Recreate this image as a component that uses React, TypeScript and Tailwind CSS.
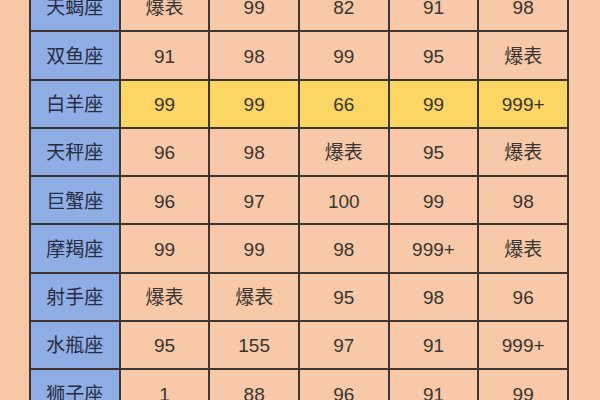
import React from "react";

const rows: { name: string; vals: string[]; hl?: boolean }[] = [
  { name: "天蝎座", vals: ["爆表", "99", "82", "91", "98"] },
  { name: "双鱼座", vals: ["91", "98", "99", "95", "爆表"] },
  { name: "白羊座", vals: ["99", "99", "66", "99", "999+"], hl: true },
  { name: "天秤座", vals: ["96", "98", "爆表", "95", "爆表"] },
  { name: "巨蟹座", vals: ["96", "97", "100", "99", "98"] },
  { name: "摩羯座", vals: ["99", "99", "98", "999+", "爆表"] },
  { name: "射手座", vals: ["爆表", "爆表", "95", "98", "96"] },
  { name: "水瓶座", vals: ["95", "155", "97", "91", "999+"] },
  { name: "狮子座", vals: ["1", "88", "96", "91", "99"] },
];

export default function App() {
  return (
    <div
      className="w-[600px] h-[400px] overflow-hidden bg-[#f7c9a8]"
      style={{ fontFamily: '"Liberation Sans", "Noto Sans CJK SC", sans-serif' }}
    >
      <div className="ml-[29px] mt-[-18px] w-[540px] grid grid-cols-6 auto-rows-[46.3px] gap-[2px] p-[2px] bg-[#3d3431]">
        {rows.map((r) => (
          <React.Fragment key={r.name}>
            <div className="bg-[#90aee6] flex items-center justify-center pt-[3px] text-[19px] text-[#272c40]">
              {r.name}
            </div>
            {r.vals.map((v, i) => (
              <div
                key={i}
                className={`${r.hl ? "bg-[#fbd664]" : "bg-[#f7c9a8]"} flex items-center justify-center pt-[3px] text-[19px] text-[#3a3532]`}
              >
                {v}
              </div>
            ))}
          </React.Fragment>
        ))}
      </div>
    </div>
  );
}
